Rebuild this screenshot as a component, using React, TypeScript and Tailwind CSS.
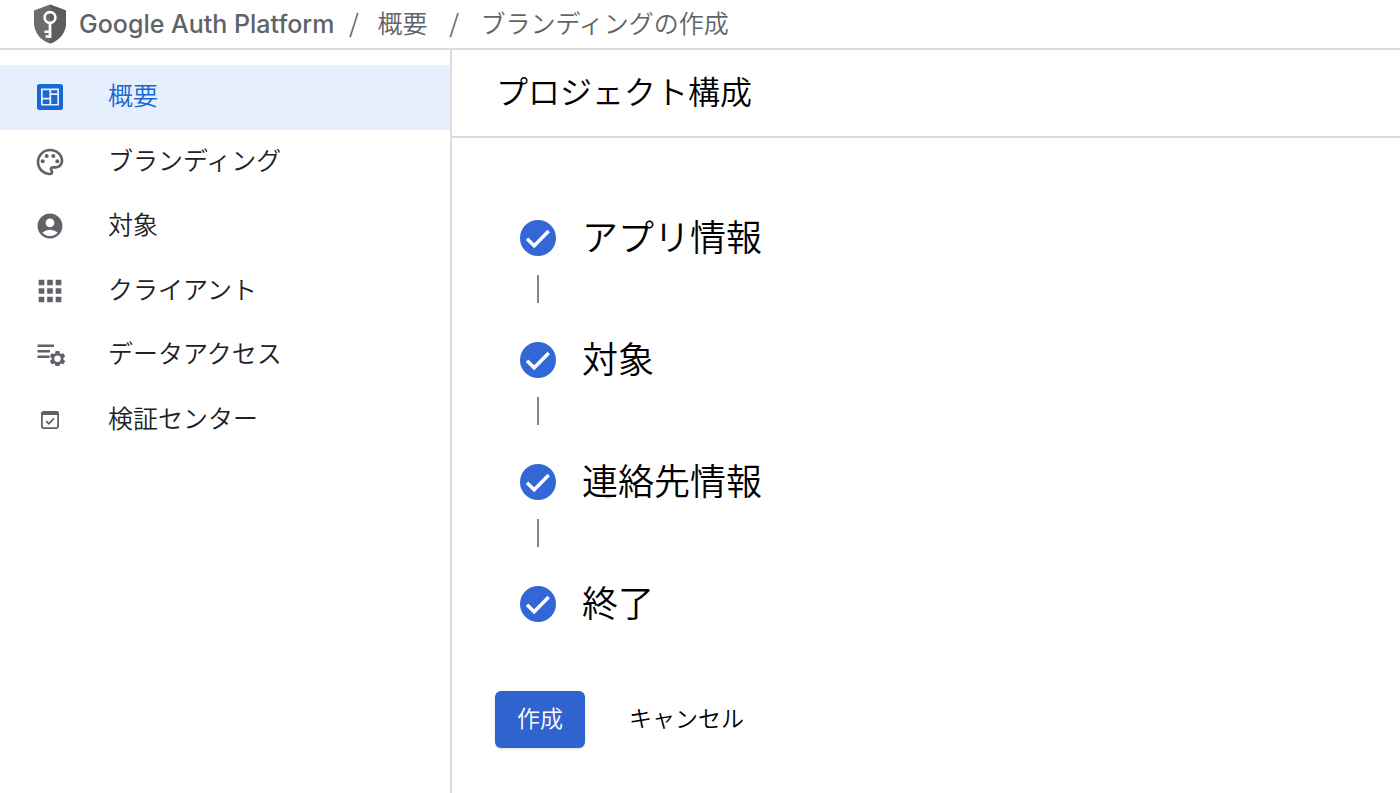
import type { ReactNode } from 'react';
import { MdAccountCircle, MdApps, MdOutlinePalette } from 'react-icons/md';

function ShieldKeyIcon() {
  return (
    <svg viewBox="0 0 34 40" className="h-10 w-[34px] shrink-0" aria-hidden="true">
      <path d="M17 0.5 33 6.5V18.5C33 28.5 26.5 36.5 17 39.5 7.5 36.5 1 28.5 1 18.5V6.5Z" fill="#6c6c6c" />
      <path d="M17 0.5 33 6.5V18.5C33 28.5 26.5 36.5 17 39.5Z" fill="#5c5c5c" />
      <circle cx="17" cy="13.5" r="5.4" fill="none" stroke="#fff" strokeWidth="2.6" />
      <path d="M15.6 18.5H18.4V34H15.6ZM11.5 26.5H16V29H11.5ZM12.5 31.2H16V33.7H12.5Z" fill="#fff" />
    </svg>
  );
}

function OverviewIcon() {
  return (
    <svg viewBox="0 0 26 26" className="size-[26px]" aria-hidden="true">
      <rect width="26" height="26" rx="2.5" fill="#1967d2" />
      <rect x="4" y="4.5" width="18" height="17" fill="#e8f0fe" />
      <path d="M5.7 6.2h6.7v7.6H5.7zM5.7 15.4h6.7v4.5H5.7zM14.2 6.2h6.1v3h-6.1zM14.2 10.9h6.1v9h-6.1z" fill="#1967d2" />
    </svg>
  );
}

function DataAccessIcon() {
  return (
    <svg viewBox="0 0 28 22" className="ml-0.5 h-[22px] w-7" fill="currentColor" aria-hidden="true">
      <path d="M0.5 0.5h16.5v2.6H0.5zM0.5 6h12.5v2.6H0.5zM0.5 11.5h12v2.6H0.5z" />
      <path
        fillRule="evenodd"
        d="M18.6 7h3.8l.5 2.4 1.2.7 2.3-.8 1.8 3.2-1.8 1.6v1.4l1.8 1.6-1.8 3.2-2.3-.8-1.2.7-.5 2.3h-3.8l-.5-2.3-1.2-.7-2.3.8-1.8-3.2 1.8-1.6v-1.4l-1.8-1.6 1.8-3.2 2.3.8 1.2-.7zM20.5 11.6a3.2 3.2 0 1 0 0 6.4 3.2 3.2 0 0 0 0-6.4z"
      />
    </svg>
  );
}

function VerificationIcon() {
  return (
    <svg viewBox="0 0 20 20" className="size-5" aria-hidden="true">
      <rect x="1.9" y="1.9" width="16.2" height="16.2" rx="1.5" fill="none" stroke="currentColor" strokeWidth="1.8" />
      <path d="M1.5 2h17v3h-17z" fill="currentColor" />
      <path d="M6.2 11.2 8.8 13.8 14 8.4" fill="none" stroke="currentColor" strokeWidth="1.8" />
    </svg>
  );
}

function CheckBadge() {
  return (
    <svg viewBox="0 0 36 36" className="size-9 shrink-0" aria-hidden="true">
      <circle cx="18" cy="18" r="18" fill="#3367d6" />
      <path d="M7 18.7 14.2 25.8 28.7 11" fill="none" stroke="#fff" strokeWidth="3.5" />
    </svg>
  );
}

const navItems: { label: string; icon: ReactNode }[] = [
  { label: '概要', icon: <OverviewIcon /> },
  { label: 'ブランディング', icon: <MdOutlinePalette className="size-8" /> },
  { label: '対象', icon: <MdAccountCircle className="size-[30px]" /> },
  { label: 'クライアント', icon: <MdApps className="size-[34px]" /> },
  { label: 'データアクセス', icon: <DataAccessIcon /> },
  { label: '検証センター', icon: <VerificationIcon /> },
];

const steps = ['アプリ情報', '対象', '連絡先情報', '終了'];

export default function App() {
  return (
    <div className="flex min-h-screen flex-col bg-white font-['Noto_Sans_CJK_JP',sans-serif] font-[350] text-black">
      <header className="flex h-[50px] items-center border-b-2 border-[#dcdddf] pl-[33px] text-[25px] leading-9 text-[#5f6368]">
        <ShieldKeyIcon />
        <nav aria-label="パンくずリスト" className="flex items-center whitespace-nowrap">
          <a href="#platform" className="ml-3 font-['Inter',sans-serif] font-medium">
            Google Auth Platform
          </a>
          <span className="w-[43px] pb-1 pl-1 text-center pr-2">/</span>
          <a href="#overview" className="pb-1">
            概要
          </a>
          <span className="w-[53px] pb-1 text-center">/</span>
          <span aria-current="page" className="pb-1">
            ブランディングの作成
          </span>
        </nav>
      </header>

      <div className="flex flex-1">
        <aside className="w-[452px] shrink-0 border-r-2 border-[#dcdddf] pt-[15px]">
          <nav aria-label="メニュー" className="flex h-[387px] flex-col">
            {navItems.map((item, index) => (
              <a
                key={item.label}
                href="#"
                aria-current={index === 0 ? 'page' : undefined}
                className={
                  index === 0
                    ? 'flex flex-1 items-center bg-[#e6effe] text-[#1967d2]'
                    : 'flex flex-1 items-center text-[#5f6368]'
                }
              >
                <span className="flex w-[100px] justify-center">{item.icon}</span>
                <span
                  className={
                    index === 0
                      ? 'pb-1.5 pl-2 text-[25px] leading-9'
                      : 'pb-1.5 pl-2 text-[25px] leading-9 text-[#202124]'
                  }
                >
                  {item.label}
                </span>
              </a>
            ))}
          </nav>
        </aside>

        <main className="min-w-0 flex-1">
          <div className="flex h-[88px] items-center border-b-2 border-[#dcdddf] px-11">
            <h1 className="pb-1.5 text-[32px] leading-12">プロジェクト構成</h1>
          </div>

          <ol className="pt-[82px] pl-[68px]">
            {steps.map((step, index) => (
              <li key={step}>
                <div className="flex h-9 items-center gap-[26px]">
                  <CheckBadge />
                  <h2 className="pb-1.5 text-[36px] leading-9">{step}</h2>
                </div>
                {index < steps.length - 1 && (
                  <div className="flex w-9 justify-center pt-[19px] pb-[39px]">
                    <div className="h-7 w-0.5 bg-[#858585]" />
                  </div>
                )}
              </li>
            ))}
          </ol>

          <div className="mt-[69px] flex items-center gap-5 pl-[43px] text-[23px] leading-8">
            <button type="button" className="h-[57px] rounded-md bg-[#3063cd] px-[22px] pb-1.5 text-white shadow-sm">
              作成
            </button>
            <button type="button" className="h-[57px] px-6 pb-1.5">
              キャンセル
            </button>
          </div>
        </main>
      </div>
    </div>
  );
}
